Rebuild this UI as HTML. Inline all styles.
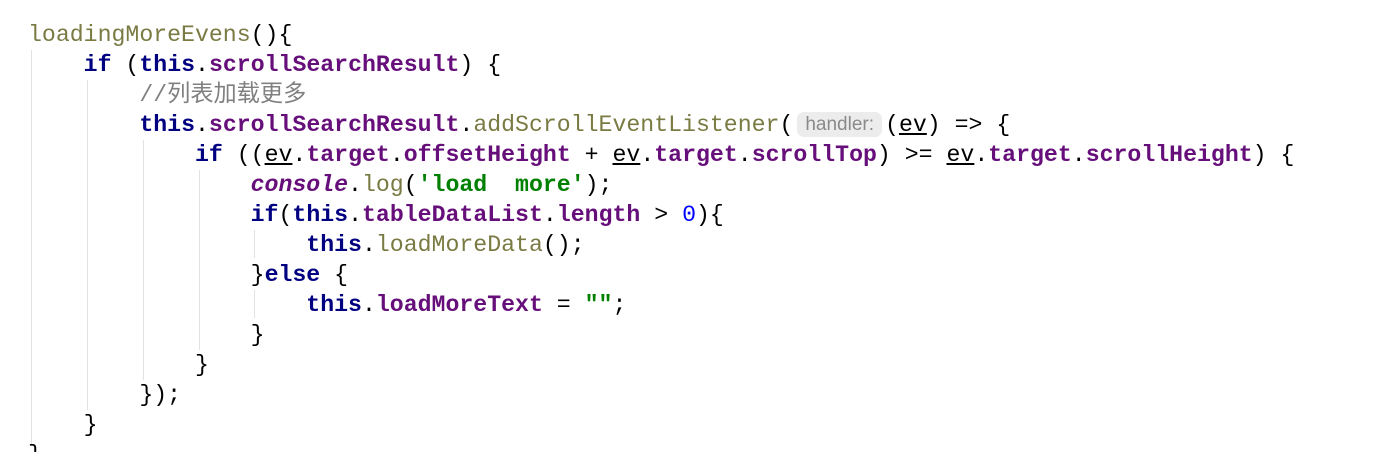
<!DOCTYPE html>
<html><head><meta charset="utf-8"><style>
html,body{margin:0;padding:0;background:#fff;width:1386px;height:452px;overflow:hidden;position:relative}
pre{margin:0;position:absolute;left:28px;top:20px;font-family:"Liberation Mono","Noto Sans CJK SC",monospace;font-size:23.2px;line-height:30px;color:#000}
.k{color:#000080;font-weight:bold}
.p{color:#660e7a;font-weight:bold}
.f{color:#7a7a43}
.s{color:#008000;font-weight:bold}
.n{color:#0000ff}
.c{color:#808080}
.i{color:#660e7a;font-style:italic;font-weight:bold}
.u{text-decoration:underline}
.h{display:inline-block;background:#ececec;color:#8a8a8a;font-family:"Liberation Sans",sans-serif;font-size:19px;line-height:25px;border-radius:7px;padding:0 8px;margin:0 3px 0 4px;vertical-align:1px}
.g{position:absolute;width:1px;background:#e2e2e2}
</style></head><body>
<div class="g" style="left:31px;top:50px;height:395px"></div>
<div class="g" style="left:87px;top:80px;height:330px"></div>
<div class="g" style="left:143px;top:140px;height:240px"></div>
<div class="g" style="left:199px;top:170px;height:180px"></div>
<div class="g" style="left:254px;top:230px;height:28px"></div>
<div class="g" style="left:254px;top:290px;height:28px"></div>
<pre><span class="f">loadingMoreEvens</span>(){
    <span class="k">if</span> (<span class="k">this</span>.<span class="p">scrollSearchResult</span>) {
        <span class="c">//列表加载更多</span>
        <span class="k">this</span>.<span class="p">scrollSearchResult</span>.<span class="f">addScrollEventListener</span>(<span class="h">handler:</span>(<span class="u">ev</span>) =&gt; {
            <span class="k">if</span> ((<span class="u">ev</span>.<span class="p">target</span>.<span class="p">offsetHeight</span> + <span class="u">ev</span>.<span class="p">target</span>.<span class="p">scrollTop</span>) &gt;= <span class="u">ev</span>.<span class="p">target</span>.<span class="p">scrollHeight</span>) {
                <span class="i">console</span>.<span class="f">log</span>(<span class="s">'load  more'</span>);
                <span class="k">if</span>(<span class="k">this</span>.<span class="p">tableDataList</span>.<span class="p">length</span> &gt; <span class="n">0</span>){
                    <span class="k">this</span>.<span class="f">loadMoreData</span>();
                }<span class="k">else</span> {
                    <span class="k">this</span>.<span class="p">loadMoreText</span> = <span class="s">""</span>;
                }
            }
        });
    }
}</pre>
</body></html>
